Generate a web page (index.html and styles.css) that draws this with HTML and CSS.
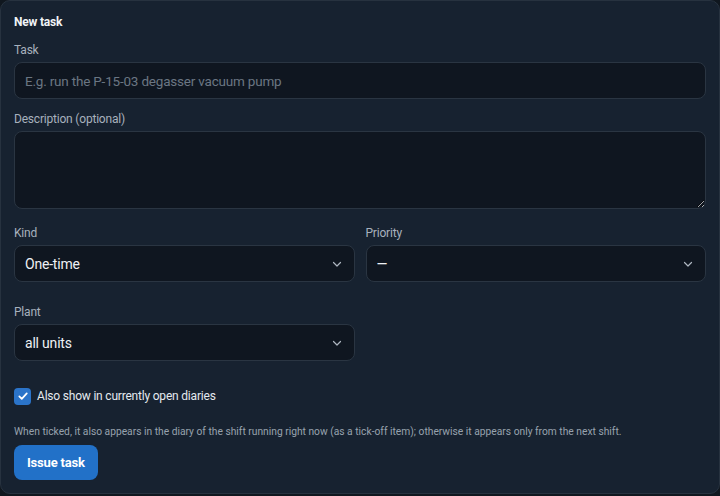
FILE: index.html
```html
<!DOCTYPE html>
<html lang="en">
<head>
<meta charset="utf-8">
<title>New task</title>
<link rel="stylesheet" href="styles.css">
</head>
<body>
<form class="card">
  <h2 class="card-title">New task</h2>

  <div class="field">
    <label class="label" for="task">Task</label>
    <input class="input" id="task" type="text" placeholder="E.g. run the P-15-03 degasser vacuum pump">
  </div>

  <div class="field">
    <label class="label" for="desc">Description (optional)</label>
    <textarea class="input textarea" id="desc"></textarea>
  </div>

  <div class="row row-kind">
    <div class="field">
      <label class="label">Kind</label>
      <div class="select"><span>One-time</span><svg class="chev" viewBox="0 0 10 10"><path d="M1.5 3.5 5 7l3.5-3.5"/></svg></div>
    </div>
    <div class="field">
      <label class="label">Priority</label>
      <div class="select"><span>—</span><svg class="chev" viewBox="0 0 10 10"><path d="M1.5 3.5 5 7l3.5-3.5"/></svg></div>
    </div>
  </div>

  <div class="row row-plant">
    <div class="field">
      <label class="label">Plant</label>
      <div class="select"><span>all units</span><svg class="chev" viewBox="0 0 10 10"><path d="M1.5 3.5 5 7l3.5-3.5"/></svg></div>
    </div>
    <div></div>
  </div>

  <label class="check">
    <span class="box"><svg viewBox="0 0 16 16"><path d="M3.8 8.4 6.6 11.2 12.3 5"/></svg></span>
    <span>Also show in currently open diaries</span>
  </label>

  <p class="hint">When ticked, it also appears in the diary of the shift running right now (as a tick-off item); otherwise it appears only from the next shift.</p>

  <button class="btn" type="button">Issue task</button>
</form>
</body>
</html>
```
FILE: styles.css
```css
* { box-sizing: border-box; }

html, body {
  margin: 0;
  background: #10171f;
  height: 100%;
}

body {
  font-family: "Roboto", "Noto Sans", sans-serif;
  color: #e4e9ef;
}

.card {
  width: 720px;
  height: 494px;
  background: #172230;
  border: 1px solid #27323f;
  border-radius: 10px;
  padding: 13px 13px 0;
  display: flex;
  flex-direction: column;
}

.card-title {
  margin: 0;
  font-size: 12px;
  font-weight: 700;
  line-height: 16px;
  letter-spacing: -0.2px;
  color: #f1f4f7;
}

.field {
  display: flex;
  flex-direction: column;
  margin-top: 12px;
}

.label {
  font-size: 12px;
  line-height: 16px;
  letter-spacing: -0.2px;
  color: #a7b1bd;
  margin-bottom: 4px;
}

.input {
  height: 37px;
  background: #0f1620;
  border: 1px solid #2a3542;
  border-radius: 8px;
  padding: 0 10px;
  font: inherit;
  font-size: 13.5px;
  letter-spacing: -0.2px;
  color: #e4e9ef;
  outline: none;
}

.input::placeholder { color: #6b7683; }

.textarea {
  height: 78px;
  resize: vertical;
  padding: 8px 10px;
}

.row {
  display: grid;
  grid-template-columns: 1fr 1fr;
  column-gap: 11px;
}

.row .field { margin-top: 0; }

.row-kind { margin-top: 16px; }
.row-plant { margin-top: 22px; }

.select {
  height: 37px;
  background: #0f1620;
  border: 1px solid #2a3542;
  border-radius: 8px;
  padding: 0 12px 0 10px;
  display: flex;
  align-items: center;
  justify-content: space-between;
  font-size: 14px;
  letter-spacing: -0.2px;
  color: #eef1f4;
}

.chev {
  width: 10px;
  height: 10px;
  fill: none;
  stroke: #aeb7c1;
  stroke-width: 1.2;
  stroke-linecap: round;
  stroke-linejoin: round;
}

.check {
  display: flex;
  align-items: center;
  gap: 6px;
  height: 18px;
  margin-top: 26px;
  font-size: 12px;
  letter-spacing: -0.2px;
  color: #e4e9ef;
}

.box {
  width: 17px;
  height: 17px;
  border-radius: 4px;
  background: #2b74c9;
  display: flex;
  align-items: center;
  justify-content: center;
}

.box svg {
  width: 14px;
  height: 14px;
  fill: none;
  stroke: #ffffff;
  stroke-width: 2;
  stroke-linecap: round;
  stroke-linejoin: round;
}

.hint {
  margin: 20px 0 0;
  font-size: 10.25px;
  line-height: 14px;
  color: #97a2ae;
}

.btn {
  align-self: flex-start;
  margin-top: 6px;
  height: 35px;
  padding: 0 13px;
  border: 0;
  border-radius: 8px;
  background: #2271c8;
  color: #ffffff;
  font: inherit;
  font-size: 13px;
  font-weight: 700;
  letter-spacing: -0.2px;
}
```
